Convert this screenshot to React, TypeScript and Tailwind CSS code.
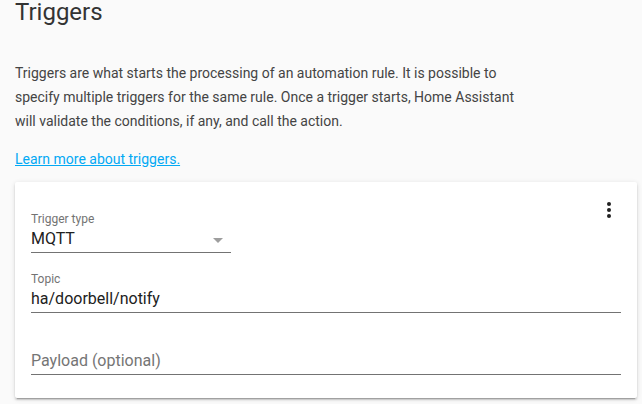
import React from 'react';

function Field({ label, value, placeholder }: { label?: string; value?: string; placeholder?: string }) {
  return (
    <div className="flex flex-col">
      <div className="h-4 text-[12px] leading-4 text-[#737373]">{label}</div>
      <div className="h-[26px] border-b border-[#737373] text-[16px] leading-6">
        {value ? (
          <span className="text-[#212121]">{value}</span>
        ) : (
          <span className="text-[#757575]">{placeholder}</span>
        )}
      </div>
    </div>
  );
}

export default function App() {
  return (
    <div className="min-h-[404px] w-[642px] overflow-hidden bg-[#fafafa] pl-[15px] pr-[5px] font-['Roboto',sans-serif]">
      <h1 className="text-[24px] leading-6 font-normal text-[#333]">Triggers</h1>

      <p className="mt-[37px] w-[510px] text-[14px] leading-6 text-[#444]">
        Triggers are what starts the processing of an automation rule. It is possible to specify multiple
        triggers for the same rule. Once a trigger starts, Home Assistant will validate the conditions, if
        any, and call the action.
      </p>

      <a href="#" className="mt-[14px] block w-fit text-[14px] leading-6 text-[#03a9f4] underline">
        Learn more about triggers.
      </a>

      <div className="mt-[11px] rounded-[2px] bg-white px-4 pt-4 pb-[23px] shadow-[0_2px_2px_0_rgba(0,0,0,0.14),0_1px_5px_0_rgba(0,0,0,0.12),0_3px_1px_-2px_rgba(0,0,0,0.2)]">
        <div className="flex items-start justify-between">
          <div className="mt-[13px] flex w-[200px] flex-col">
            <div className="h-4 text-[12px] leading-4 text-[#737373]">Trigger type</div>
            <div className="flex h-[26px] items-start justify-between border-b border-[#737373] text-[16px] leading-6 text-[#212121]">
              <span>MQTT</span>
              <svg width="10" height="5" viewBox="0 0 10 5" className="mr-[8px] mt-[11px]">
                <path d="M0 0 L10 0 L5 5 Z" fill="#9e9e9e" />
              </svg>
            </div>
          </div>
          <svg width="24" height="24" viewBox="0 0 24 24" className="text-[#212121]">
            <circle cx="12" cy="6" r="2" fill="currentColor" />
            <circle cx="12" cy="12" r="2" fill="currentColor" />
            <circle cx="12" cy="18" r="2" fill="currentColor" />
          </svg>
        </div>

        <div className="mt-[18px]">
          <Field label="Topic" value="ha/doorbell/notify" />
        </div>
        <div className="mt-[20px]">
          <Field placeholder="Payload (optional)" />
        </div>
      </div>
    </div>
  );
}
